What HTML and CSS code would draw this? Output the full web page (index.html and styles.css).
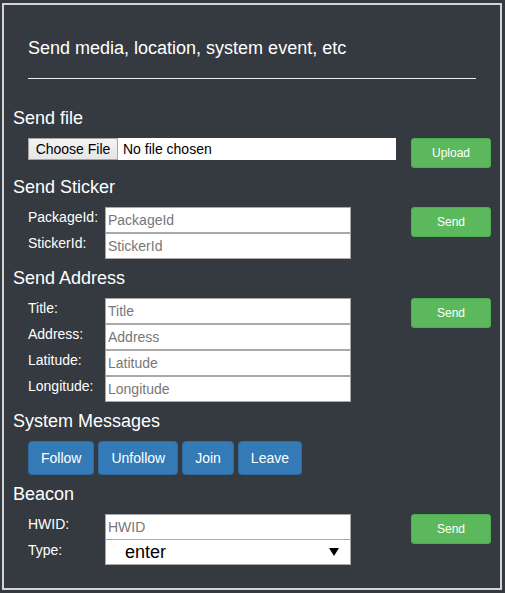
FILE: index.html
```html
<!DOCTYPE html>
<html lang="en">
<head>
<meta charset="utf-8">
<title>Send media</title>
<link rel="stylesheet" href="styles.css">
</head>
<body>
<div class="panel">
  <header class="panel-header">
    <h4 class="title">Send media, location, system event, etc</h4>
    <hr class="rule">
  </header>

  <section class="section">
    <h4 class="section-title">Send file</h4>
    <div class="row">
      <div class="file">
        <span class="file-btn">Choose File</span>
        <span class="file-name">No file chosen</span>
      </div>
      <button class="btn-send">Upload</button>
    </div>
  </section>

  <section class="section">
    <h4 class="section-title">Send Sticker</h4>
    <div class="row">
      <div class="fields">
        <label class="field-label">PackageId:</label>
        <input class="field-input" type="text" placeholder="PackageId">
        <label class="field-label">StickerId:</label>
        <input class="field-input" type="text" placeholder="StickerId">
      </div>
      <button class="btn-send">Send</button>
    </div>
  </section>

  <section class="section">
    <h4 class="section-title">Send Address</h4>
    <div class="row">
      <div class="fields">
        <label class="field-label">Title:</label>
        <input class="field-input" type="text" placeholder="Title">
        <label class="field-label">Address:</label>
        <input class="field-input" type="text" placeholder="Address">
        <label class="field-label">Latitude:</label>
        <input class="field-input" type="text" placeholder="Latitude">
        <label class="field-label">Longitude:</label>
        <input class="field-input" type="text" placeholder="Longitude">
      </div>
      <button class="btn-send">Send</button>
    </div>
  </section>

  <section class="section">
    <h4 class="section-title">System Messages</h4>
    <div class="row btn-group">
      <button class="btn-primary">Follow</button>
      <button class="btn-primary">Unfollow</button>
      <button class="btn-primary">Join</button>
      <button class="btn-primary">Leave</button>
    </div>
  </section>

  <section class="section">
    <h4 class="section-title">Beacon</h4>
    <div class="row">
      <div class="fields">
        <label class="field-label">HWID:</label>
        <input class="field-input" type="text" placeholder="HWID">
        <label class="field-label">Type:</label>
        <div class="select">
          <span class="select-value">enter</span>
          <svg class="select-arrow" width="10" height="8" viewBox="0 0 10 8"><polygon points="0,0 10,0 5,8" fill="#000"/></svg>
        </div>
      </div>
      <button class="btn-send">Send</button>
    </div>
  </section>
</div>
</body>
</html>
```

FILE: styles.css
```css
html, body {
  margin: 0;
  padding: 0;
  background: #343a40;
}

body {
  font-family: "Liberation Sans", Arial, sans-serif;
  font-size: 14px;
  color: #fff;
}

.panel {
  box-sizing: border-box;
  width: 500px;
  height: 587px;
  margin: 3px 0 0 2px;
  padding: 33px 9px 0;
  border: 2px solid #d4d4d4;
  display: flex;
  flex-direction: column;
}

.panel-header {
  padding: 0 15px;
  margin-bottom: 20px;
}

.title {
  margin: 0;
  font-size: 18px;
  line-height: 20px;
  font-weight: normal;
  color: #fff;
}

.rule {
  margin: 20px 0 0;
  height: 0;
  border: 0;
  border-top: 1px solid #eee;
}

.section-title {
  margin: 9px 0 10px;
  font-size: 18px;
  line-height: 20px;
  font-weight: normal;
  color: #fff;
}

.row {
  display: flex;
  align-items: flex-start;
  padding-left: 15px;
}

.fields {
  display: grid;
  grid-template-columns: 77px 246px;
}

.field-label {
  font-size: 14px;
  line-height: 20px;
  color: #fff;
}

.field-input {
  box-sizing: border-box;
  height: 26px;
  margin: 0;
  padding: 1px 2px;
  border: 1px solid #a9a9a9;
  background: #fff;
  font-family: "Liberation Sans", Arial, sans-serif;
  font-size: 14px;
  color: #000;
  outline: none;
}

.field-input::placeholder {
  color: #777;
}

.file {
  display: flex;
  width: 368px;
  height: 22px;
  background: #fff;
}

.file-btn {
  box-sizing: border-box;
  width: 90px;
  height: 22px;
  line-height: 20px;
  text-align: center;
  border: 1px solid #a6a6a6;
  background: linear-gradient(#f3f3f3, #e6e6e6);
  color: #000;
  font-size: 14px;
}

.file-name {
  padding-left: 5px;
  line-height: 22px;
  color: #000;
  font-size: 14px;
}

.btn-send {
  box-sizing: border-box;
  width: 80px;
  height: 30px;
  margin-left: auto;
  padding: 5px 10px;
  border: 1px solid #4cae4c;
  border-radius: 3px;
  background: #5cb85c;
  color: #fff;
  font-family: "Liberation Sans", Arial, sans-serif;
  font-size: 12px;
  line-height: 18px;
}

.btn-group {
  gap: 4px;
}

.btn-primary {
  box-sizing: border-box;
  height: 34px;
  padding: 6px 12px;
  border: 1px solid #2e6da4;
  border-radius: 4px;
  background: #337ab7;
  color: #fff;
  font-family: "Liberation Sans", Arial, sans-serif;
  font-size: 14px;
  line-height: 20px;
}

.select {
  box-sizing: border-box;
  height: 25px;
  display: flex;
  align-items: center;
  justify-content: space-between;
  padding: 0 11px 0 19px;
  border: 1px solid #a9a9a9;
  border-top: 0;
  background: #fff;
}

.select-value {
  font-size: 18px;
  line-height: 23px;
  color: #000;
}

.select-arrow {
  display: block;
}
```
